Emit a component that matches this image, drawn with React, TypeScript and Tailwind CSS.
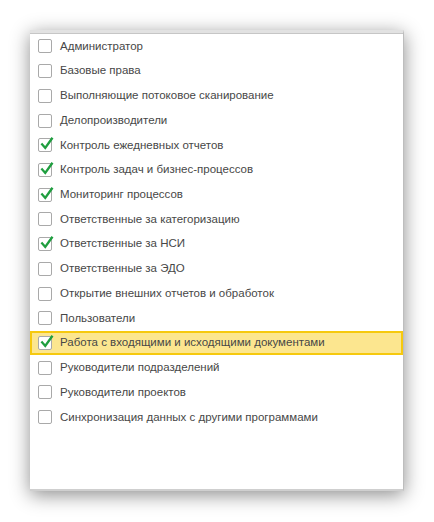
const roles: { name: string; checked: boolean }[] = [
  { name: "Администратор", checked: false },
  { name: "Базовые права", checked: false },
  { name: "Выполняющие потоковое сканирование", checked: false },
  { name: "Делопроизводители", checked: false },
  { name: "Контроль ежедневных отчетов", checked: true },
  { name: "Контроль задач и бизнес-процессов", checked: true },
  { name: "Мониторинг процессов", checked: true },
  { name: "Ответственные за категоризацию", checked: false },
  { name: "Ответственные за НСИ", checked: true },
  { name: "Ответственные за ЭДО", checked: false },
  { name: "Открытие внешних отчетов и обработок", checked: false },
  { name: "Пользователи", checked: false },
  { name: "Работа с входящими и исходящими документами", checked: true },
  { name: "Руководители подразделений", checked: false },
  { name: "Руководители проектов", checked: false },
  { name: "Синхронизация данных с другими программами", checked: false },
];

const CURRENT = 12;

function CheckBox({ checked }: { checked: boolean }) {
  return (
    <span className="relative h-[14px] w-[14px] shrink-0 rounded-[2px] border border-[#a9a9a9] bg-white">
      {checked && (
        <svg
          viewBox="0 0 16 16"
          className="absolute left-[1px] top-[-3px] h-[16px] w-[14px]"
        >
          <path
            d="M2.5 8.5 L6 12.5 L13.5 2"
            fill="none"
            stroke="#1f9e3f"
            strokeWidth="2.7"
            strokeLinecap="square"
          />
        </svg>
      )}
    </span>
  );
}

export default function App() {
  return (
    <div className="min-h-[522px] w-[434px] bg-white pl-[30px] pt-[30px]">
      <div className="h-[461px] w-[374px] border-t-[3px] border-r border-b-2 border-t-[#e2e2e2] border-r-[#bdbdbd] border-b-[#cfcfcf] bg-white shadow-[0_4px_18px_rgba(0,0,0,0.45)]">
        <div className="h-full border-t border-[#c6c6c6]">
          <ul className="font-['Liberation_Sans',Arial,sans-serif] text-[11.5px] text-[#474747]">
            {roles.map((r, i) => (
              <li
                key={r.name}
                className={`flex h-[24.73px] items-center gap-2 ${
                  i === CURRENT
                    ? "border-2 border-[#f6c90e] bg-[#fce68f] pl-[6px]"
                    : "pl-2"
                }`}
              >
                <CheckBox checked={r.checked} />
                <span className="whitespace-nowrap">{r.name}</span>
              </li>
            ))}
          </ul>
        </div>
      </div>
    </div>
  );
}
